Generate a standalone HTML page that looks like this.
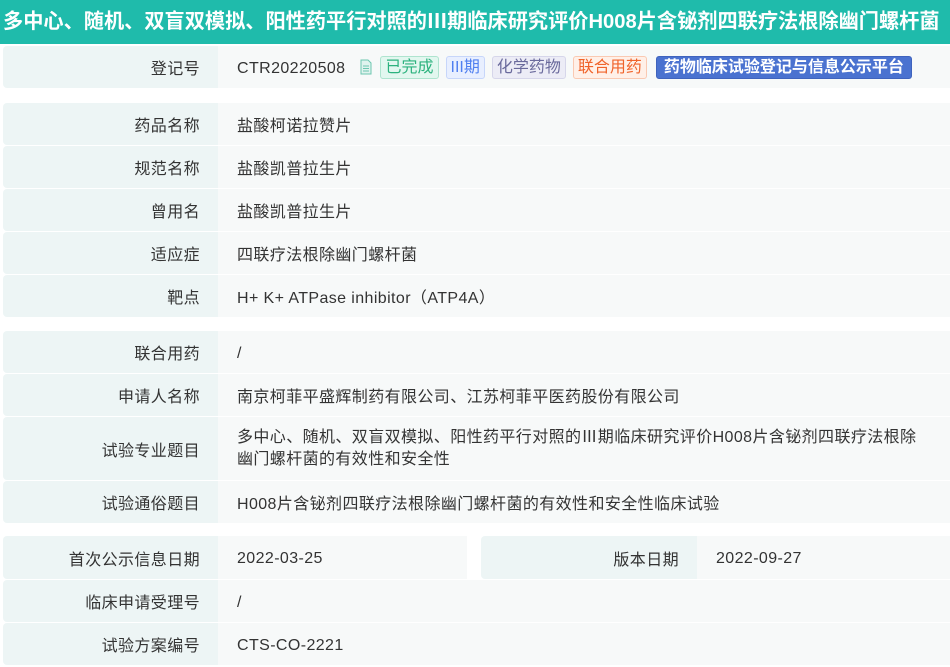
<!DOCTYPE html>
<html><head><meta charset="utf-8"><style>
*{margin:0;padding:0;box-sizing:border-box}
body{width:950px;height:667px;background:#fff;font-family:"Liberation Sans","Noto Sans CJK SC",sans-serif;color:#333;font-size:16px;position:relative;overflow:hidden}
.hd{position:absolute;left:0;top:0;width:950px;height:44px;background:#1fbbab;color:#fff;font-weight:bold;font-size:20.2px;line-height:44px;padding-left:3px;white-space:nowrap;letter-spacing:0}
.l{position:absolute;background:#edf5f5;text-align:right;padding-right:18px;border-radius:4px 0 0 4px;display:flex;align-items:center;justify-content:flex-end;letter-spacing:0.4px}
.v{position:absolute;background:#f7f9f9;padding-left:19px;display:flex;align-items:center;letter-spacing:0.4px}
.lt{padding-top:3px}
.tag{display:inline-block;height:23px;line-height:21px;padding:0 4px;border:1px solid;border-radius:3px;margin-left:7px;font-size:16px;letter-spacing:0}
</style></head><body>
<div class="hd">多中心、随机、双盲双模拟、阳性药平行对照的Ⅲ期临床研究评价H008片含铋剂四联疗法根除幽门螺杆菌</div>

<div class="l" style="left:3px;top:46px;width:215px;height:42px">登记号</div>
<div class="v" style="left:218px;top:46px;width:732px;height:42px"><span class="lt">CTR20220508</span>
<svg width="14" height="16" viewBox="0 0 14 16" style="margin-left:14px"><path d="M2 1h7l3 3v11H2z" fill="#e0f3ee" stroke="#6cc6b0"/><path d="M4 7h6M4 9.5h6M4 12h6" stroke="#6cc6b0"/></svg>
<span class="tag" style="color:#2cb27e;background:#e2f7ef;border-color:#aee4cf">已完成</span>
<span class="tag" style="color:#4f7ff0;background:#e8efff;border-color:#c7d6fa">III期</span>
<span class="tag" style="color:#6a6a9c;background:#ececf6;border-color:#d6d6ea">化学药物</span>
<span class="tag" style="color:#f0632a;background:#fff0e8;border-color:#fac9b2">联合用药</span>
<span class="tag" style="color:#fff;background:#4a72d0;border-color:#3f63bd;font-weight:bold;margin-left:9px;padding:0 7px">药物临床试验登记与信息公示平台</span>
</div>

<div class="l" style="left:3px;top:103px;width:215px;height:42px">药品名称</div>
<div class="v" style="left:218px;top:103px;width:732px;height:42px">盐酸柯诺拉赞片</div>
<div class="l" style="left:3px;top:146px;width:215px;height:42px">规范名称</div>
<div class="v" style="left:218px;top:146px;width:732px;height:42px">盐酸凯普拉生片</div>
<div class="l" style="left:3px;top:189px;width:215px;height:42px">曾用名</div>
<div class="v" style="left:218px;top:189px;width:732px;height:42px">盐酸凯普拉生片</div>
<div class="l" style="left:3px;top:232px;width:215px;height:42px">适应症</div>
<div class="v" style="left:218px;top:232px;width:732px;height:42px">四联疗法根除幽门螺杆菌</div>
<div class="l" style="left:3px;top:275px;width:215px;height:42px">靶点</div>
<div class="v" style="left:218px;top:275px;width:732px;height:42px">H+ K+ ATPase inhibitor（ATP4A）</div>

<div class="l" style="left:3px;top:331px;width:215px;height:42px">联合用药</div>
<div class="v" style="left:218px;top:331px;width:732px;height:42px"><span class="lt">/</span></div>
<div class="l" style="left:3px;top:374px;width:215px;height:42px">申请人名称</div>
<div class="v" style="left:218px;top:374px;width:732px;height:42px">南京柯菲平盛辉制药有限公司、江苏柯菲平医药股份有限公司</div>
<div class="l" style="left:3px;top:417px;width:215px;height:63px">试验专业题目</div>
<div class="v" style="left:218px;top:417px;width:732px;height:63px;line-height:22px;padding-right:20px">多中心、随机、双盲双模拟、阳性药平行对照的Ⅲ期临床研究评价H008片含铋剂四联疗法根除幽门螺杆菌的有效性和安全性</div>
<div class="l" style="left:3px;top:481px;width:215px;height:42px">试验通俗题目</div>
<div class="v" style="left:218px;top:481px;width:732px;height:42px">H008片含铋剂四联疗法根除幽门螺杆菌的有效性和安全性临床试验</div>

<div class="l" style="left:3px;top:536px;width:215px;height:43px">首次公示信息日期</div>
<div class="v" style="left:218px;top:536px;width:249px;height:43px"><span class="lt">2022-03-25</span></div>
<div class="l" style="left:481px;top:536px;width:216px;height:43px">版本日期</div>
<div class="v" style="left:697px;top:536px;width:253px;height:43px"><span class="lt">2022-09-27</span></div>
<div class="l" style="left:3px;top:580px;width:215px;height:42px">临床申请受理号</div>
<div class="v" style="left:218px;top:580px;width:732px;height:42px"><span class="lt">/</span></div>
<div class="l" style="left:3px;top:623px;width:215px;height:42px">试验方案编号</div>
<div class="v" style="left:218px;top:623px;width:732px;height:42px"><span class="lt">CTS-CO-2221</span></div>
</body></html>
